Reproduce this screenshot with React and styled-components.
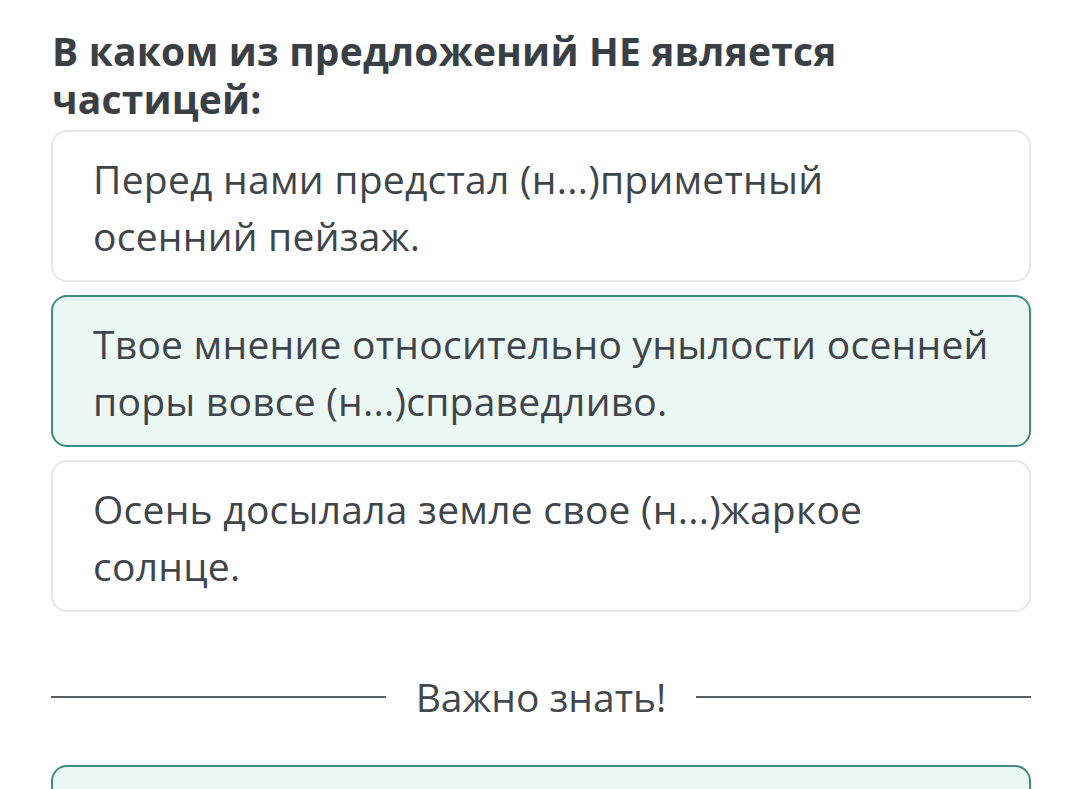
import React from 'react'
import styled, { createGlobalStyle } from 'styled-components'

const GlobalStyle = createGlobalStyle`
  html, body {
    margin: 0;
    padding: 0;
    background: #ffffff;
  }
  body {
    font-family: "Open Sans", "Noto Sans", sans-serif;
    overflow: hidden;
  }
`

// line breaks kept as on the device screen
const options = [
  { text: 'Перед нами предстал (н...)приметный\nосенний пейзаж.', selected: false },
  { text: 'Твое мнение относительно унылости осенней\nпоры вовсе (н...)справедливо.', selected: true },
  { text: 'Осень досылала земле свое (н...)жаркое\nсолнце.', selected: false },
]

function App() {
  return (
    <>
      <GlobalStyle />
      <Page>
        <Question>В каком из предложений НЕ является частицей:</Question>
        <OptionList>
          {options.map((o, i) => (
            <Option key={i} $selected={o.selected}>
              {o.text}
            </Option>
          ))}
        </OptionList>
        <Divider>
          <Line />
          <DividerLabel>Важно знать!</DividerLabel>
          <Line />
        </Divider>
        <InfoCard />
      </Page>
    </>
  )
}

const Page = styled.div`
  width: 980px;
  padding: 27px 49px 0 51px;
  display: flex;
  flex-direction: column;
`

const Question = styled.h1`
  margin: 0 0 7px 1px;
  font-size: 39px;
  line-height: 48px;
  font-weight: 700;
  letter-spacing: 0.18px;
  color: #3a3f46;
  width: 880px;
`

const OptionList = styled.div`
  display: flex;
  flex-direction: column;
  gap: 13px;
`

const Option = styled.div`
  box-sizing: border-box;
  height: 152px;
  padding: 18px 10px 16px 40px;
  border-radius: 16px;
  border: 2px solid ${p => (p.$selected ? '#3f8c82' : '#e6e7e8')};
  background: ${p => (p.$selected ? '#ecf8f3' : '#ffffff')};
  font-size: 39px;
  line-height: 57px;
  letter-spacing: 0.25px;
  color: #3f454b;
  white-space: pre-line;
`

const Divider = styled.div`
  margin-top: 56px;
  display: flex;
  align-items: center;
  gap: 30px;
  height: 58px;
`

const Line = styled.div`
  flex: 1;
  height: 2px;
  background: #5a5e62;
`

const DividerLabel = styled.span`
  font-size: 39px;
  color: #43484d;
  line-height: 58px;
`

const InfoCard = styled.div`
  margin-top: 39px;
  height: 60px;
  border-radius: 16px;
  border: 2px solid #3f8c82;
  background: #ecf8f3;
`

export default App
